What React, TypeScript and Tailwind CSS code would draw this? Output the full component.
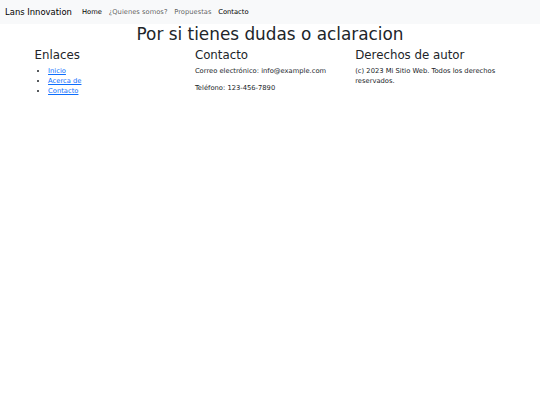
export default function App() {
  const links = ["Inicio", "Acerca de", "Contacto"];

  return (
    <div className="min-h-[405px] bg-white font-['DejaVu_Sans',sans-serif] text-[6.75px] leading-[10.125px] font-normal text-[#212529]">
      <nav className="flex items-center bg-[#f8f9fa] px-[5.06px] pt-[4px] pb-[2.75px]">
        <a href="#" className="mr-[6.75px] py-[2.11px] text-[8.4375px] leading-[12.66px] text-black">
          Lans Innovation
        </a>
        <ul className="flex">
          <li>
            <a href="#" className="block px-[3.375px] py-[3.375px] text-black">Home</a>
          </li>
          <li>
            <a href="#" className="block px-[3.375px] py-[3.375px] text-black/65">¿Quienes somos?</a>
          </li>
          <li>
            <a href="#" className="block px-[3.375px] py-[3.375px] text-black/65">Propuestas</a>
          </li>
          <li>
            <a href="#" className="block px-[3.375px] py-[3.375px] text-black">Contacto</a>
          </li>
        </ul>
      </nav>

      <h1 className="mb-[3.375px] text-center text-[16.875px] leading-[20.25px] font-normal">
        Por si tienes dudas o aclaracion
      </h1>

      <footer className="mx-auto w-[481px] px-[5.06px] pt-[1px]">
        <div className="grid grid-cols-3 gap-[10.125px]">
          <div>
            <h3 className="mb-[3.375px] text-[11.8125px] leading-[14.175px] font-normal">Enlaces</h3>
            <ul className="mb-[6.75px] list-disc pl-[13.5px]">
              {links.map((l) => (
                <li key={l}>
                  <a href="#" className="text-[#0d6efd] underline">{l}</a>
                </li>
              ))}
            </ul>
          </div>
          <div>
            <h3 className="mb-[3.375px] text-[11.8125px] leading-[14.175px] font-normal">Contacto</h3>
            <p className="mb-[6.75px]">Correo electrónico: info@example.com</p>
            <p className="mb-[6.75px]">Teléfono: 123-456-7890</p>
          </div>
          <div>
            <h3 className="mb-[3.375px] text-[11.8125px] leading-[14.175px] font-normal">Derechos de autor</h3>
            <p className="mb-[6.75px]">(c) 2023 Mi Sitio Web. Todos los derechos reservados.</p>
          </div>
        </div>
      </footer>
    </div>
  );
}
